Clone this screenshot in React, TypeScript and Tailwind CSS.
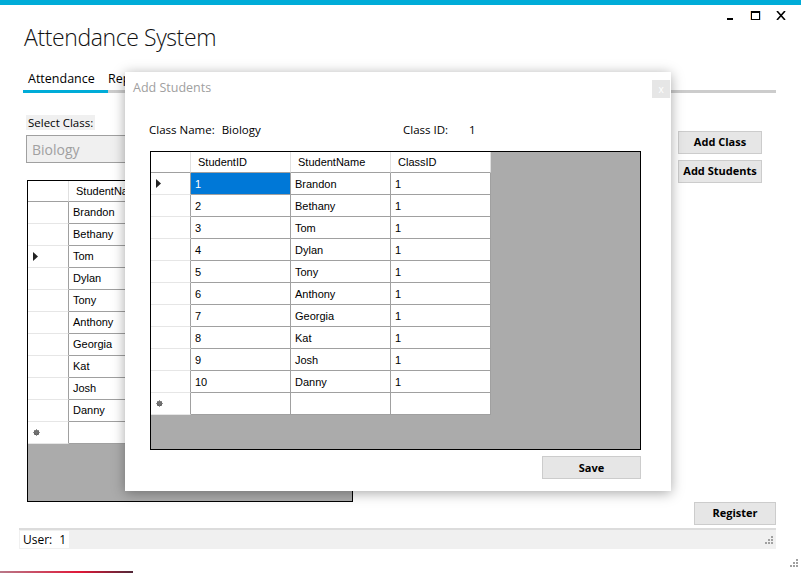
import React from "react";

const UI = { fontFamily: '"Open Sans", "Noto Sans", sans-serif' };
const GRID = { fontFamily: '"Liberation Sans", Arial, sans-serif' };

const names = ["Brandon", "Bethany", "Tom", "Dylan", "Tony", "Anthony", "Georgia", "Kat", "Josh", "Danny"];

function Arrow() {
  return (
    <svg width="5" height="9" viewBox="0 0 5 9">
      <path d="M0 0 L5 4.5 L0 9 Z" fill="#222" />
    </svg>
  );
}

function Star() {
  return (
    <svg width="7" height="7" viewBox="0 0 7 7">
      <circle cx="3.5" cy="3.5" r="2.6" fill="#555" />
      <path d="M3.5 0 V7 M0 3.5 H7 M1 1 L6 6 M6 1 L1 6" stroke="#777" strokeWidth="0.8" />
    </svg>
  );
}

function RowHead({ mark }: { mark?: "arrow" | "star" }) {
  return (
    <div className="h-[22px] border-r border-b border-r-[#a0a0a0] border-b-[#e6e6e6] bg-white flex items-center pl-[5px]">
      {mark === "arrow" && <Arrow />}
      {mark === "star" && <Star />}
    </div>
  );
}

function Cell({ text, selected }: { text?: string; selected?: boolean }) {
  return (
    <div
      className={
        "h-[22px] border-r border-b border-[#a0a0a0] flex items-center pl-[4px] text-[11px] " +
        (selected ? "bg-[#0078d7] text-white" : "bg-white text-black")
      }
    >
      {text}
    </div>
  );
}

function Head({ text }: { text?: string }) {
  return (
    <div className="h-[21px] border-r border-b border-r-[#e0e0e0] border-b-[#a0a0a0] bg-white flex items-center pl-[7px] text-[11px] text-black">
      {text}
    </div>
  );
}

function Btn({ label, className }: { label: string; className: string }) {
  return (
    <div
      className={
        "h-[23px] bg-[#e6e6e6] border border-[#cccccc] flex items-center justify-center text-[11px] font-bold text-black " +
        className
      }
      style={UI}
    >
      {label}
    </div>
  );
}

function WindowControls() {
  return (
    <div className="absolute top-[11px] right-[15px] flex items-start">
      <svg width="8" height="9" viewBox="0 0 8 9" className="mr-[16px]">
        <rect x="1" y="7" width="6" height="2" fill="#000" />
      </svg>
      <svg width="11" height="9" viewBox="0 0 11 9" className="mr-[15px]">
        <rect x="0.5" y="0" width="1" height="9" fill="#f0a050" />
        <rect x="9.5" y="0" width="1" height="9" fill="#60a8e8" />
        <rect x="1.5" y="0.5" width="8" height="8" fill="none" stroke="#000" strokeWidth="1" />
        <rect x="1.5" y="0.5" width="8" height="1.5" fill="#000" />
      </svg>
      <svg width="10" height="9" viewBox="0 0 10 9">
        <path d="M1 0 L9 9 M9 0 L1 9" stroke="#000" strokeWidth="1.6" />
      </svg>
    </div>
  );
}

function Grip() {
  const dots = [
    [6, 0],
    [3, 3],
    [6, 3],
    [0, 6],
    [3, 6],
    [6, 6],
  ];
  return (
    <svg width="8" height="8" viewBox="0 0 8 8">
      {dots.map(([x, y]) => (
        <rect key={`${x}-${y}`} x={x} y={y} width="2" height="2" fill="#a0a0a0" />
      ))}
    </svg>
  );
}

function MainGrid() {
  return (
    <div className="w-[326px] h-[322px] border border-black bg-[#ababab] overflow-hidden" style={GRID}>
      <div className="grid grid-cols-[41px_100px_100px_84px]">
        <Head />
        <Head text="StudentName" />
        <Head text="ClassID" />
        <Head />
        {names.map((n, i) => (
          <React.Fragment key={n}>
            <RowHead mark={i === 2 ? "arrow" : undefined} />
            <Cell text={n} />
            <Cell text="1" />
            <Cell />
          </React.Fragment>
        ))}
        <RowHead mark="star" />
        <Cell />
        <Cell />
        <Cell />
      </div>
    </div>
  );
}

function AddStudentsDialog() {
  return (
    <div className="absolute left-[125px] top-[72px] w-[546px] h-[419px] bg-white shadow-[0_2px_12px_rgba(0,0,0,0.35)] flex flex-col">
      <div className="flex items-start justify-between pl-[8px] pr-[1px] pt-[8px]">
        <div className="text-[12.5px] text-[#a0a0a0] leading-[16px]" style={UI}>
          Add Students
        </div>
        <div className="w-[18px] h-[18px] bg-[#e6e6e6] flex items-center justify-center text-[10px] text-white leading-none" style={UI}>
          x
        </div>
      </div>
      <div className="flex text-[11.5px] text-black mt-[23px] pl-[24px]" style={UI}>
        <div className="w-[254px] flex gap-[7px]">
          <span>Class Name:</span>
          <span>Biology</span>
        </div>
        <div className="flex gap-[21px]">
          <span>Class ID:</span>
          <span>1</span>
        </div>
      </div>
      <div className="ml-[25px] mt-[13px] w-[491px] h-[299px] border border-black bg-[#ababab]" style={GRID}>
        <div className="grid grid-cols-[40px_100px_100px_100px] w-max">
          <Head />
          <Head text="StudentID" />
          <Head text="StudentName" />
          <Head text="ClassID" />
          {names.map((n, i) => (
            <React.Fragment key={n}>
              <RowHead mark={i === 0 ? "arrow" : undefined} />
              <Cell text={String(i + 1)} selected={i === 0} />
              <Cell text={n} />
              <Cell text="1" />
            </React.Fragment>
          ))}
          <RowHead mark="star" />
          <Cell />
          <Cell />
          <Cell />
        </div>
      </div>
      <div className="flex justify-end pr-[30px] mt-[6px]">
        <Btn label="Save" className="w-[99px]" />
      </div>
    </div>
  );
}

export default function App() {
  return (
    <div className="relative w-[801px] h-[573px] bg-white overflow-hidden">
      <div className="h-[5px] bg-[#00acd8]" />
      <div className="w-[776px] shrink-0 pl-[19px]">
        <div
          className="pl-[5px] pt-[16px] text-[23px] leading-[32px] tracking-[-0.4px] text-[#111] font-light"
          style={UI}
        >
          Attendance System
        </div>
        <div className="mt-[18px] pl-[4px] flex text-[12.5px] leading-[16px] text-black" style={UI}>
          <div className="w-[85px] pl-[5px]">Attendance</div>
          <div>Reports</div>
        </div>
        <div className="ml-[4px] mt-[3px] flex h-[3px]">
          <div className="w-[85px] bg-[#00acd8]" />
          <div className="flex-1 bg-[#cccccc]" />
        </div>

        <div className="flex mt-[22px]">
          <div className="pl-[7px]">
            <div className="w-fit bg-[#f0f0f0] text-[11.5px] leading-[15px] text-black px-[2px]" style={UI}>
              Select Class:
            </div>
            <div
              className="mt-[5px] w-[325px] h-[28px] bg-[#f0f0f0] border border-[#a0a0a0] flex items-center pl-[5px] text-[14px] text-[#a0a0a0]"
              style={UI}
            >
              Biology
            </div>
            <div className="mt-[17px] ml-[1px]">
              <MainGrid />
            </div>
          </div>
          <div className="ml-[325px] pt-[16px] flex flex-col gap-[6px]">
            <Btn label="Add Class" className="w-[84px]" />
            <Btn label="Add Students" className="w-[84px]" />
          </div>
        </div>

        <div className="flex justify-end">
          <Btn label="Register" className="w-[82px]" />
        </div>

        <div className="mt-[3px] h-[21px] bg-[#f0f0f0] border-t-2 border-[#dcdcdc] flex items-center justify-between pr-[3px]">
          <div className="ml-[1px] h-[17px] bg-white flex items-center px-[3px] gap-[7px] text-[12px] text-black" style={UI}>
            <span>User:</span>
            <span>1</span>
          </div>
          <Grip />
        </div>
      </div>

      <WindowControls />
      <AddStudentsDialog />

      <div className="absolute right-[3px] bottom-[6px]">
        <Grip />
      </div>
      <div className="absolute left-0 bottom-0 w-[133px] h-[2px] bg-[linear-gradient(90deg,#b87888,#e01838_60%,#502838)]" />
    </div>
  );
}
